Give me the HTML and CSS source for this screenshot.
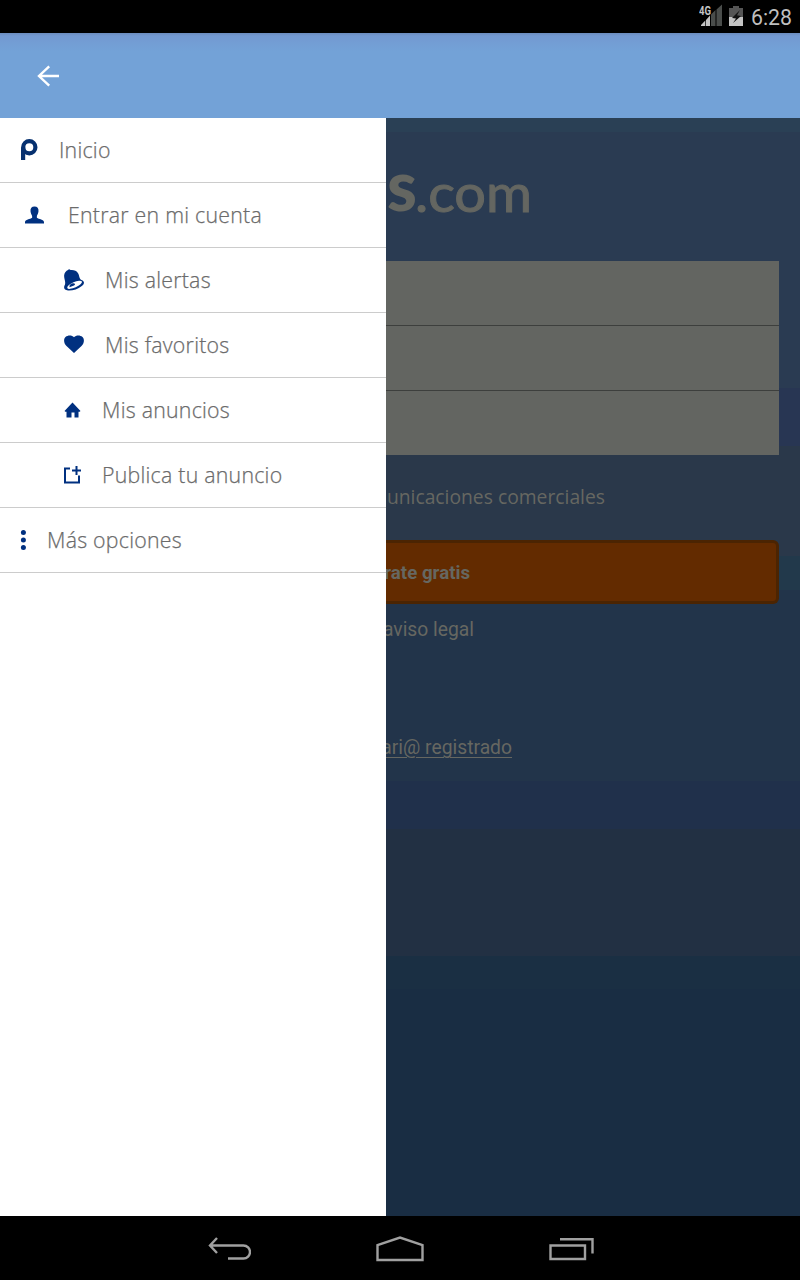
FILE: index.html
```html
<!DOCTYPE html>
<html lang="es">
<head>
<meta charset="utf-8">
<title>pisos.com</title>
<link rel="stylesheet" href="styles.css">
</head>
<body>
<div class="screen">
  <header class="status">
    <svg class="signal" width="24" height="24" viewBox="0 0 24 24">
      <text class="net" x="0" y="11" textLength="12" lengthAdjust="spacingAndGlyphs">4G</text>
      <path fill="#c4c4c4" d="M2 22v-1l4.300-4.500V22zM7 22v-6l4-4.500V22z"/>
      <path fill="#4a4d4b" d="M12 22V10.500l4.500-4.500v16zM17.500 22V5.500l5.500-5v21.500z"/>
    </svg>
    <svg class="battery" width="14" height="22" viewBox="0 0 14 22">
      <path fill="#555" d="M0 3h4V1h6v2h4v9H0z"/>
      <path fill="#c4c4c4" d="M0 12h14v9H0z"/>
      <path fill="#111" d="M11 5 3 13l4 .5L4 18l8-7-4-.8z"/>
    </svg>
    <span class="clock">6:28</span>
  </header>
  <div class="appbar">
    <svg width="24" height="24" viewBox="0 0 24 24" fill="none" stroke="#fff" stroke-width="2.400"><path d="M13.200 2.300 3 12l10.200 9.700M3 12h20"/></svg>
  </div>
  <main class="main">
    <nav class="drawer">
      <a class="item home"><svg width="17" height="22" viewBox="0 0 17 22" fill="none" stroke="#06306f" stroke-width="4.200"><circle cx="8.300" cy="8.300" r="6.100"/><path d="M2.100 21V8.300"/></svg><span>Inicio</span></a>
      <a class="item account"><svg width="19" height="20" viewBox="0 0 20 20"><path fill="#003080" d="M10 1c3 0 4.500 2 4.200 5-.2 2.500-1.200 3.500-1.700 5v2c2 1.500 7.500 2 7.500 4.500V19H0v-1.500C0 15 5.500 14.500 7.500 13v-2C7 9.500 6 8.500 5.800 6 5.500 3 7 1 10 1z"/></svg><span>Entrar en mi cuenta</span></a>
      <a class="item sub"><svg width="20" height="22" viewBox="0 0 20 22"><path fill="#003080" d="M4 1Q5-.3 6.500 1c3-.3 6 .3 7.700 3.500 1.500 3 .8 5 3.300 6.500 3.500 1.300 3 4 .3 6-4 3.300-9.300 4.800-13.800 4.500-4-.3-4.800-3-3-6C1.800 12-.3 9.500.2 6 .6 3.500 2 2 4 1z"/><ellipse cx="10.600" cy="15.800" rx="8" ry="2.700" transform="rotate(-24 10.600 15.800)" fill="#fff"/><path fill="#003080" d="M5.500 18.200c-.5-2 1-3.500 3.300-4 2.300-.2 3 1.200 1.200 2.400z"/></svg><span>Mis alertas</span></a>
      <a class="item sub heart"><svg width="20" height="20" viewBox="0 0 20 20"><path fill="#003080" d="m10 18-7.500-7C-.5 8-.5 4 1.500 2 4-.2 8 0 10 2.300 12 0 16-.2 18.500 2c2 2 2 6-1 9z"/></svg><span>Mis favoritos</span></a>
      <a class="item sub ads"><svg width="17" height="16" viewBox="0 0 17 16"><path fill="#003080" d="m8.500.5 8 8.500-.8.800h-1.200V15.500h-4V10.500h-3v5h-5V9.800H1.300L.5 9z"/></svg><span>Mis anuncios</span></a>
      <a class="item sub ads"><svg width="17" height="18" viewBox="0 0 17 18" fill="none" stroke="#003080" stroke-width="2"><path d="M6 2.500H1V16.500h14V9.500M12.500 0v9M8 4.500h9"/></svg><span>Publica tu anuncio</span></a>
      <a class="item more"><svg width="6" height="22" viewBox="0 0 6 22" fill="#003080"><circle cx="3.400" cy="3.500" r="2.500"/><circle cx="3.400" cy="11" r="2.500"/><circle cx="3.400" cy="18.500" r="2.500"/></svg><span>Más opciones</span></a>
    </nav>
    <section class="content">
      <div class="logo"><svg width="150" height="60" viewBox="0 0 150 60"><text class="logo-s" x="1" y="43" textLength="30" lengthAdjust="spacingAndGlyphs">s</text><text class="logo-com" x="29" y="43.500" textLength="117" lengthAdjust="spacingAndGlyphs">.com</text></svg></div>
      <div class="fields"><div class="field"></div><div class="field"></div><div class="field"></div></div>
      <p class="line consent">unicaciones comerciales</p>
      <div class="button">rate gratis</div>
      <p class="line legal">aviso legal</p>
      <p class="line registered"><u>ari@ registrado</u></p>
    </section>
  </main>
  <footer class="navbar">
    <svg width="44" height="24" viewBox="0 0 44 24"><path d="M10 1 3 8.500 10 16M3 8.500h33.500a6.500 6.500 0 0 1 0 13H21"/></svg>
    <svg width="48" height="26" viewBox="0 0 48 26"><path d="M1.500 24v-15L24 1.500l22.500 7.500v15z"/></svg>
    <svg width="45" height="24" viewBox="0 0 45 24"><path d="M1.500 8.500h34.500v13.500H1.500zM11 2.300h32.500V16.500"/></svg>
  </footer>
</div>
</body>
</html>
```
FILE: styles.css
```css
* { box-sizing: border-box; }
body { margin: 0; background: #000; }
svg { display: block; flex: none; }
.screen { width: 800px; height: 1280px; display: flex; flex-direction: column; overflow: hidden; }

.status { height: 33px; display: flex; justify-content: flex-end; align-items: flex-start; padding: 4px 8px 0 0; background: #000; }
.net { font: bold 12px Roboto, sans-serif; fill: #c4c4c4; }
.signal { margin-right: 6px; }
.battery { margin: 1px 8px 0 0; }
.clock { font: 21.300px/28px Roboto, sans-serif; color: #bfbfbf; }

.appbar { height: 85px; padding: 31px 0 0 36px; background: linear-gradient(#6b8cbd 0, #7399d1 3px, #73a0d6 14px, #73a2d7 18px); }

.main { height: 1098px; display: flex; }
.drawer { width: 386px; background: #fff; flex: none; }
.item { display: flex; align-items: center; height: 65px; border-bottom: 1px solid #ccc; padding-left: 21px; gap: 21px; font: 300 21.300px/30px "Open Sans", "Noto Sans", sans-serif; letter-spacing: 0.250px; -webkit-text-stroke: 0.250px #6b6b6b; color: #6b6b6b; white-space: nowrap; }
.account { padding-left: 25px; gap: 24px; }
.sub { padding-left: 64px; }
.ads { gap: 21px; }
.more { padding-left: 20px; }

.content {
  width: 414px; overflow: hidden; color: #666761;
  background: linear-gradient(#2a4055 14px, #2a3b52 14px 270px, #283653 270px 328px, #2a384a 328px 438px, #22394b 438px 472px, #22344a 472px 663px, #20304b 663px 711px, #223043 711px 838px, #1a2f43 838px 871px, #192d43 871px);
}
.logo { height: 143px; padding-top: 50px; }
.logo svg { overflow: visible; }
.logo-s { font: 900 70px Lato, sans-serif; fill: #646661; }
.logo-com { font: 400 53px Lato, sans-serif; fill: #646661; stroke: #646661; stroke-width: 1px; }
.fields { width: 393px; height: 194px; background: #636561; }
.field { height: 65px; border-bottom: 1px solid #3d3f3d; }
.field:last-child { height: 64px; border: 0; }
.line { margin: 0; display: flex; justify-content: flex-end; white-space: nowrap; font: 19.300px/28px Roboto, sans-serif; }
.consent { margin-top: 28px; padding-right: 195px; font-family: "Open Sans", "Noto Sans", sans-serif; }
.button { margin-top: 29px; display: flex; justify-content: flex-end; align-items: center; width: 393px; height: 64px; padding: 2px 306px 0 0; white-space: nowrap; background: #632b00; border: 3px solid #4b2402; border-left: 0; border-radius: 0 6px 6px 0; font: bold 18.700px/28px Roboto, sans-serif; }
.legal { margin-top: 12px; padding-right: 326px; }
.registered { margin-top: 90px; padding-right: 288px; }
.registered u { text-decoration-thickness: 1px; text-underline-offset: 3px; }

.navbar { height: 64px; background: #000; display: flex; justify-content: center; align-items: center; gap: 125px; padding: 1px 0 0; }
.navbar path { fill: none; stroke: #a0a0a0; stroke-width: 2.400; }
```
